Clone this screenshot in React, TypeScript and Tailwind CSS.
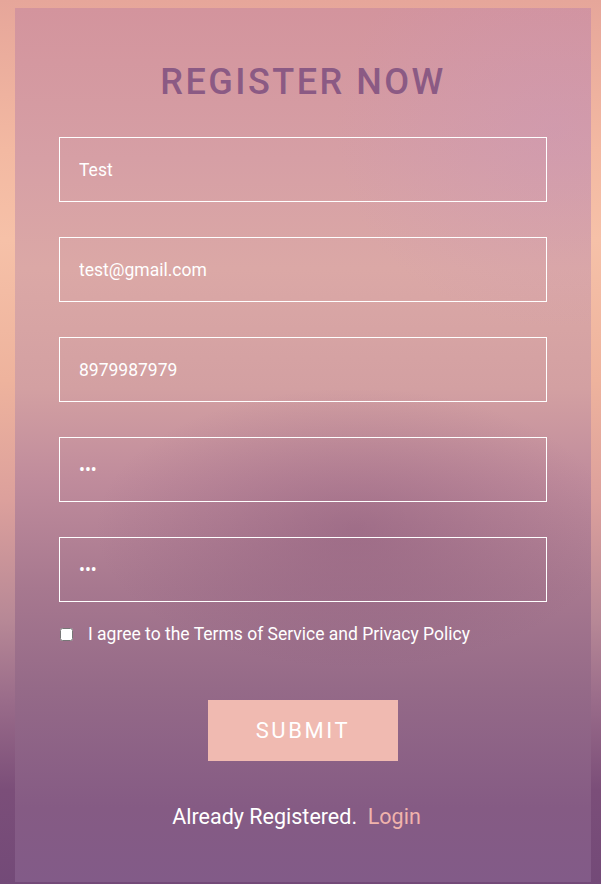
import { useState } from 'react';

const fields = [
  { name: 'name', type: 'text', value: 'Test' },
  { name: 'email', type: 'email', value: 'test@gmail.com' },
  { name: 'phone', type: 'tel', value: '8979987979' },
  { name: 'password', type: 'password', value: 'abc' },
  { name: 'confirm', type: 'password', value: 'abc' },
];

export default function App() {
  const [agree, setAgree] = useState(false);

  return (
    <div
      className="min-h-[884px] w-full pt-2 pl-[15px] pr-[10px] pb-[2px] bg-[linear-gradient(180deg,#e6a69a_0px,#f3b9a2_150px,#f6c1a8_240px,#eeb39d_380px,#dca09c_500px,#b78896_620px,#9a6c8a_700px,#7b4e79_790px,#734a78_884px)]"
      style={{ fontFamily: 'Roboto, "Open Sans", sans-serif' }}
    >
      <div className="relative min-h-[874px] w-[576px] overflow-hidden bg-[linear-gradient(180deg,#d3949d_0px,#d69fa5_150px,#dba8a6_260px,#d3a0a2_380px,#c08c9c_470px,#a7788f_580px,#956a88_680px,#855b84_800px,#825b88_874px)]">
        <div className="pointer-events-none absolute inset-0 bg-[radial-gradient(ellipse_260px_140px_at_340px_520px,rgba(120,70,110,0.35),transparent)]" />
        <div className="pointer-events-none absolute inset-0 bg-[radial-gradient(ellipse_220px_200px_at_540px_120px,rgba(200,150,190,0.35),transparent)]" />

        <form
          className="relative px-11 pt-[52px]"
          onSubmit={(e) => e.preventDefault()}
          noValidate
        >
          <h1 className="text-center text-[36px] font-medium leading-[44px] tracking-[2.5px] text-[#8b5a84]">
            REGISTER NOW
          </h1>

          <div className="mt-[33px] flex flex-col gap-[35px]">
            {fields.map((f) => (
              <input
                key={f.name}
                name={f.name}
                type={f.type}
                defaultValue={f.value}
                className="h-[65px] w-full border border-white bg-transparent px-[19px] text-[17.5px] text-white outline-none"
              />
            ))}
          </div>

          <label className="mt-[20px] flex items-center gap-[15px] text-[17.5px] leading-[24px] text-white">
            <input
              type="checkbox"
              checked={agree}
              onChange={(e) => setAgree(e.target.checked)}
              className="ml-px h-[13px] w-[13px]"
            />
            <span>I agree to the Terms of Service and Privacy Policy</span>
          </label>

          <div className="mt-[54px] flex justify-center">
            <button
              type="submit"
              className="h-[61px] w-[190px] bg-[#f0bab1] text-[22px] tracking-[2.6px] text-white"
            >
              SUBMIT
            </button>
          </div>

          <p className="mt-[42px] pr-[13px] text-center text-[21.5px] leading-[28px] text-white">
            Already Registered.&nbsp;&nbsp;
            <a href="#" className="text-[#f0b3ac]">
              Login
            </a>
          </p>
        </form>
      </div>
    </div>
  );
}
